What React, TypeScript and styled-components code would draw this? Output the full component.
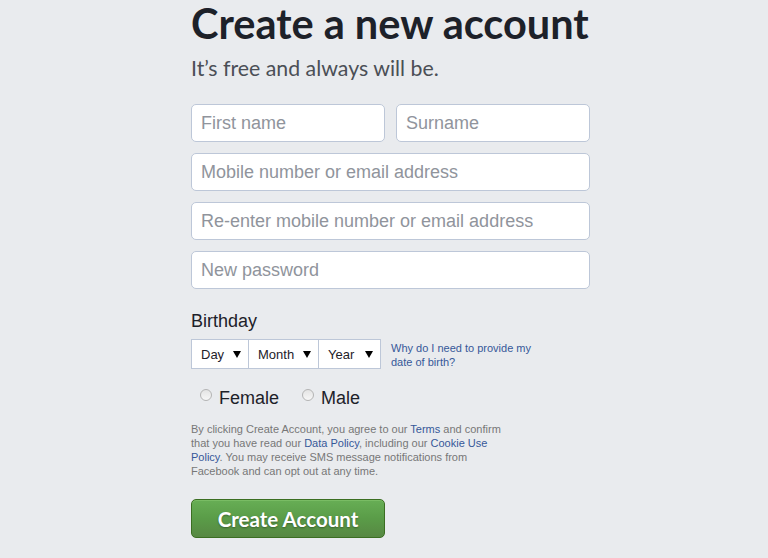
import React from "react";
import styled, { createGlobalStyle } from "styled-components";

const Global = createGlobalStyle`
  html, body { margin: 0; padding: 0; background: #e9ebee; }
  body { font-family: Arial, "Liberation Sans", sans-serif; }
`;

const Page = styled.div`
  width: 768px;
  height: 558px;
  overflow: hidden;
  background: #e9ebee;
  padding-left: 191px;
  box-sizing: border-box;
`;

const Column = styled.div`
  width: 399px;
  display: flex;
  flex-direction: column;
`;

const Title = styled.h1`
  margin: 0;
  width: 410px;
  font-family: Lato, sans-serif;
  font-weight: 700;
  font-size: 41.5px;
  line-height: 46px;
  color: #1d2129;
  white-space: nowrap;
`;

const Subtitle = styled.div`
  margin-top: 8px;
  font-family: Lato, sans-serif;
  font-weight: 400;
  font-size: 21.3px;
  line-height: 28px;
  color: #4b4f56;
`;

const Fields = styled.div`
  margin-top: 22px;
  display: flex;
  flex-direction: column;
  gap: 11px;
`;

const Row = styled.div`
  display: flex;
  gap: 11px;
`;

const Input = styled.input<{ $half?: boolean }>`
  box-sizing: border-box;
  width: ${(p) => (p.$half ? "194px" : "100%")};
  height: 38px;
  flex: none;
  border: 1px solid #bdc7d8;
  border-radius: 5px;
  background: #fff;
  padding: 0 9px;
  font-family: Arial, "Liberation Sans", sans-serif;
  font-size: 18px;
  color: #1d2129;
  outline: none;
  &::placeholder { color: #90949c; opacity: 1; }
`;

const Label = styled.div`
  margin-top: 21px;
  font-family: Arial, "Liberation Sans", sans-serif;
  font-size: 18px;
  line-height: 22px;
  color: #1d2129;
`;

const BirthRow = styled.div`
  margin-top: 7px;
  display: flex;
  align-items: flex-start;
`;

const Selects = styled.div`
  display: flex;
`;

const Select = styled.div<{ $w: number }>`
  box-sizing: border-box;
  width: ${(p) => p.$w}px;
  height: 30px;
  border: 1px solid #bdc7d8;
  margin-left: -1px;
  &:first-child { margin-left: 0; }
  background: #fff;
  display: flex;
  align-items: center;
  justify-content: space-between;
  padding: 0 7px 0 9px;
  font-family: Arial, "Liberation Sans", sans-serif;
  font-size: 13px;
  color: #1d2129;
`;

const Caret = styled.span`
  width: 0;
  height: 0;
  border-left: 4px solid transparent;
  border-right: 4px solid transparent;
  border-top: 7px solid #000;
`;

const Why = styled.a`
  margin-left: 10px;
  margin-top: 2px;
  width: 150px;
  font-family: Arial, "Liberation Sans", sans-serif;
  font-size: 11px;
  line-height: 14px;
  color: #365899;
  text-decoration: none;
`;

const Genders = styled.div`
  margin-top: 18px;
  padding-left: 9px;
  display: flex;
  gap: 23px;
`;

const Gender = styled.label`
  display: flex;
  align-items: center;
  gap: 7px;
  font-family: Arial, "Liberation Sans", sans-serif;
  font-size: 18px;
  line-height: 22px;
  color: #1d2129;
`;

const Radio = styled.span`
  box-sizing: border-box;
  width: 12px;
  height: 12px;
  border-radius: 50%;
  border: 1px solid #b4b4b4;
  background: linear-gradient(180deg, #e4e4e4 0%, #f7f7f7 100%);
  margin-top: -7px;
`;

const Terms = styled.p`
  margin: 13px 0 0;
  width: 320px;
  font-family: Arial, "Liberation Sans", sans-serif;
  font-size: 11px;
  line-height: 14px;
  color: #777;
`;

const Link = styled.a`
  color: #365899;
  text-decoration: none;
`;

const Button = styled.button`
  margin-top: 21px;
  box-sizing: border-box;
  width: 194px;
  height: 39px;
  border: 1px solid #3b6e22;
  border-radius: 5px;
  background: linear-gradient(180deg, #67ae55 0%, #5a9c48 50%, #578843 100%);
  box-shadow: inset 0 1px 0 #79bc64;
  color: #fff;
  font-family: Lato, sans-serif;
  font-weight: 700;
  font-size: 20.5px;
  text-shadow: 0 1px 2px rgba(0, 0, 0, 0.35);
  padding: 0;
  cursor: pointer;
`;

export default function App() {
  return (
    <>
      <Global />
      <Page>
        <Column>
          <Title>Create a new account</Title>
          <Subtitle>It’s free and always will be.</Subtitle>
          <Fields>
            <Row>
              <Input $half placeholder="First name" />
              <Input $half placeholder="Surname" />
            </Row>
            <Input placeholder="Mobile number or email address" />
            <Input placeholder="Re-enter mobile number or email address" />
            <Input placeholder="New password" type="password" />
          </Fields>
          <Label>Birthday</Label>
          <BirthRow>
            <Selects>
              <Select $w={58}>Day<Caret /></Select>
              <Select $w={71}>Month<Caret /></Select>
              <Select $w={63}>Year<Caret /></Select>
            </Selects>
            <Why href="#">Why do I need to provide my date of birth?</Why>
          </BirthRow>
          <Genders>
            <Gender><Radio />Female</Gender>
            <Gender><Radio />Male</Gender>
          </Genders>
          <Terms>
            By clicking Create Account, you agree to our <Link href="#">Terms</Link> and confirm
            that you have read our <Link href="#">Data Policy</Link>, including our{" "}
            <Link href="#">Cookie Use Policy</Link>. You may receive SMS message notifications from
            Facebook and can opt out at any time.
          </Terms>
          <Button>Create Account</Button>
        </Column>
      </Page>
    </>
  );
}
